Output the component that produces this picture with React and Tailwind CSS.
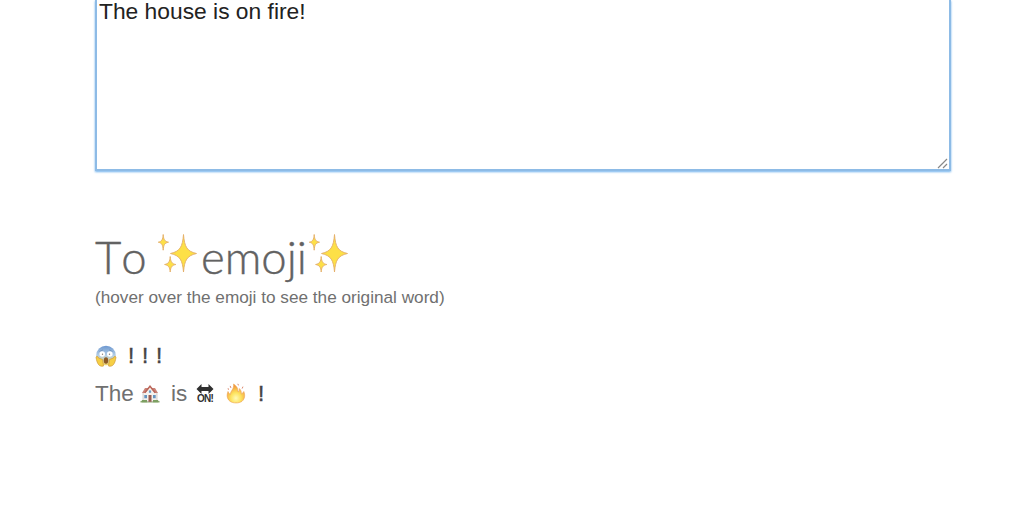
function Sparkles() {
  return (
    <svg viewBox="0 0 40 40" className="h-10 w-10 shrink-0">
      <g fill="#fde047" stroke="#e3ae68" strokeWidth="0.9" strokeLinejoin="round">
        <path d="M25.5 0.5C26.5 13 29 17.3 38.5 19.5C29 21.7 26.5 26 25.5 38C24.5 26 22 21.7 12.5 19.5C22 17.3 24.5 13 25.5 0.5Z" />
        <path d="M5.2 0.5C5.6 5.8 6.6 7.4 10.5 8.2C6.6 9 5.6 10.8 5.2 16.2C4.8 10.8 3.8 9 0.3 8.2C3.8 7.4 4.8 5.8 5.2 0.5Z" />
        <path d="M12.2 22.5C12.6 27.8 13.8 29.7 17.8 30.5C13.8 31.3 12.6 33.2 12.2 38C11.8 33.2 10.6 31.3 6.6 30.5C10.6 29.7 11.8 27.8 12.2 22.5Z" />
      </g>
    </svg>
  );
}

function Scream() {
  return (
    <svg viewBox="0 0 22 22" className="h-[22px] w-[22px]">
      <defs>
        <linearGradient id="scream" x1="0" y1="0" x2="0" y2="1">
          <stop offset="0" stopColor="#6c97d0" />
          <stop offset="0.5" stopColor="#b5cfe6" />
          <stop offset="1" stopColor="#f3d66a" />
        </linearGradient>
      </defs>
      <circle cx="11" cy="10.5" r="9.8" fill="url(#scream)" />
      <path d="M4.5 6.5L8 4.8M17.5 6.5L14 4.8" stroke="#6f90bb" strokeWidth="0.8" />
      <circle cx="7.2" cy="9" r="2.8" fill="#fff" />
      <circle cx="14.8" cy="9" r="2.8" fill="#fff" />
      <circle cx="7.5" cy="9.2" r="0.7" fill="#8a7f72" />
      <circle cx="14.5" cy="9.2" r="0.7" fill="#8a7f72" />
      <path d="M1 12C2 10.5 3 11.5 3.5 13L7.5 14.5L8.5 21C4.5 22 2 19.5 1 12ZM21 12C20 10.5 19 11.5 18.5 13L14.5 14.5L13.5 21C17.5 22 20 19.5 21 12Z" fill="#f6cf45" stroke="#cf9a3b" strokeWidth="0.7" />
      <ellipse cx="11" cy="15.5" rx="2.2" ry="3.2" fill="#8d5a26" />
    </svg>
  );
}

function House() {
  return (
    <svg viewBox="0 0 20 20" className="h-5 w-5">
      <path d="M0.5 17Q10 14.5 19.5 17V18.5H0.5Z" fill="#8aa76e" />
      <path d="M3 8.5H17V17.5H3Z" fill="#f4f1ee" stroke="#b8b0ac" strokeWidth="0.6" />
      <path d="M2 9L5 4H15L18 9Z" fill="#c98379" />
      <path d="M5.6 8.6L10 3L14.4 8.6V11H5.6Z" fill="#f6f2ee" />
      <path d="M4.8 8.8L10 2.2L15.2 8.8" fill="none" stroke="#bb6558" strokeWidth="1.5" />
      <path d="M8.9 6.4H11.1V8.8H8.9Z" fill="#6c9cc6" />
      <path d="M4.3 11H7V14.2H4.3ZM13 11H15.7V14.2H13Z" fill="#6594bf" />
      <path d="M8.5 11H11.5V17.8H8.5Z" fill="#9a5c4f" />
      <path d="M2 16H7V18.2H2ZM13 16H18V18.2H13Z" fill="#7c9f62" />
    </svg>
  );
}

function OnArrow() {
  return (
    <span className="flex w-[18px] flex-col items-center text-[#303030]">
      <svg viewBox="0 0 18 10" className="h-2.5 w-[18px]">
        <path d="M0.5 5L5.5 0V3H12.5V0L17.5 5L12.5 10V7H5.5V10Z" fill="currentColor" />
      </svg>
      <span className="text-[10px] leading-[10px] font-bold tracking-[-0.7px]">ON!</span>
    </span>
  );
}

function Fire() {
  return (
    <svg viewBox="0 0 20 22" className="h-[22px] w-5">
      <defs>
        <radialGradient id="fire" cx="0.5" cy="0.75" r="0.65">
          <stop offset="0" stopColor="#fffab8" />
          <stop offset="0.45" stopColor="#fde35f" />
          <stop offset="1" stopColor="#f19a3c" />
        </radialGradient>
      </defs>
      <path d="M4 18.3C0.5 15.5 0.8 11.5 2 8.5C2.8 10.2 3.6 11 4.5 11.3C4.3 7.8 8.2 6.5 7.6 1C10.8 3 12.2 5.8 12 9C13 8.5 13.5 7.2 13.3 5.5C15.2 7.4 15.6 9.2 15.2 11C16.4 10.6 17.2 9.8 17.8 8.5C19.2 12 19 15.8 16 18.3C13 20.5 7 20.5 4 18.3Z" fill="url(#fire)" stroke="#eda04e" strokeWidth="0.6" />
      <path d="M4.3 3.3L4.8 4.6M12 1.2L12.3 2M16.8 4L16.3 5.2M2.2 5.6L2.4 6.4" stroke="#dc8a70" strokeWidth="1" strokeLinecap="round" />
    </svg>
  );
}

export default function App() {
  return (
    <main className="h-[512px] w-full overflow-hidden bg-white pl-[95px] font-['Liberation_Sans',Arial,sans-serif] text-[#707070]">
      <div className="relative h-[171px] w-[856px]">
        <textarea
          defaultValue="The house is on fire!"
          spellCheck={false}
          className="block h-full w-full resize-none border-2 border-t-0 border-[#8dbbe6] px-0.5 pt-0 text-[22.8px] leading-[22px] text-[#222] shadow-[0_1px_2px_#70b2ed] outline-none"
        />
        <svg viewBox="0 0 12 12" className="absolute right-0.5 bottom-0.5 h-3 w-3" fill="none" stroke="#888" strokeWidth="1.2">
          <path d="M1 11L10 2M6 11L10 7" />
        </svg>
      </div>

      <h1 className="mt-[55px] flex h-14 items-center font-[Lato,sans-serif] text-[45.5px] leading-[56px] font-light text-[#626262] [-webkit-text-stroke:0.4px_#626262] [font-kerning:none]">
        <span className="w-[63px] pt-1.5">To</span>
        <Sparkles />
        <span className="ml-[3px] w-[108px] pt-1.5">emoji</span>
        <Sparkles />
      </h1>
      <p className="mt-[3px] text-[17.2px] leading-6">(hover over the emoji to see the original word)</p>

      <div className="mt-7 text-[22.5px]">
        <div className="flex h-[38px] items-center">
          <Scream />
          <span className="ml-[11px] tracking-[7.7px] text-[#444] [-webkit-text-stroke:0.4px_#444]">!!!</span>
        </div>
        <div className="flex h-[38px] items-center">
          <span className="w-[45px]">The</span>
          <House />
          <span className="ml-[11px] w-[25px]">is</span>
          <OnArrow />
          <span className="ml-3"><Fire /></span>
          <span className="ml-3 text-[#444] [-webkit-text-stroke:0.4px_#444]">!</span>
        </div>
      </div>
    </main>
  );
}
